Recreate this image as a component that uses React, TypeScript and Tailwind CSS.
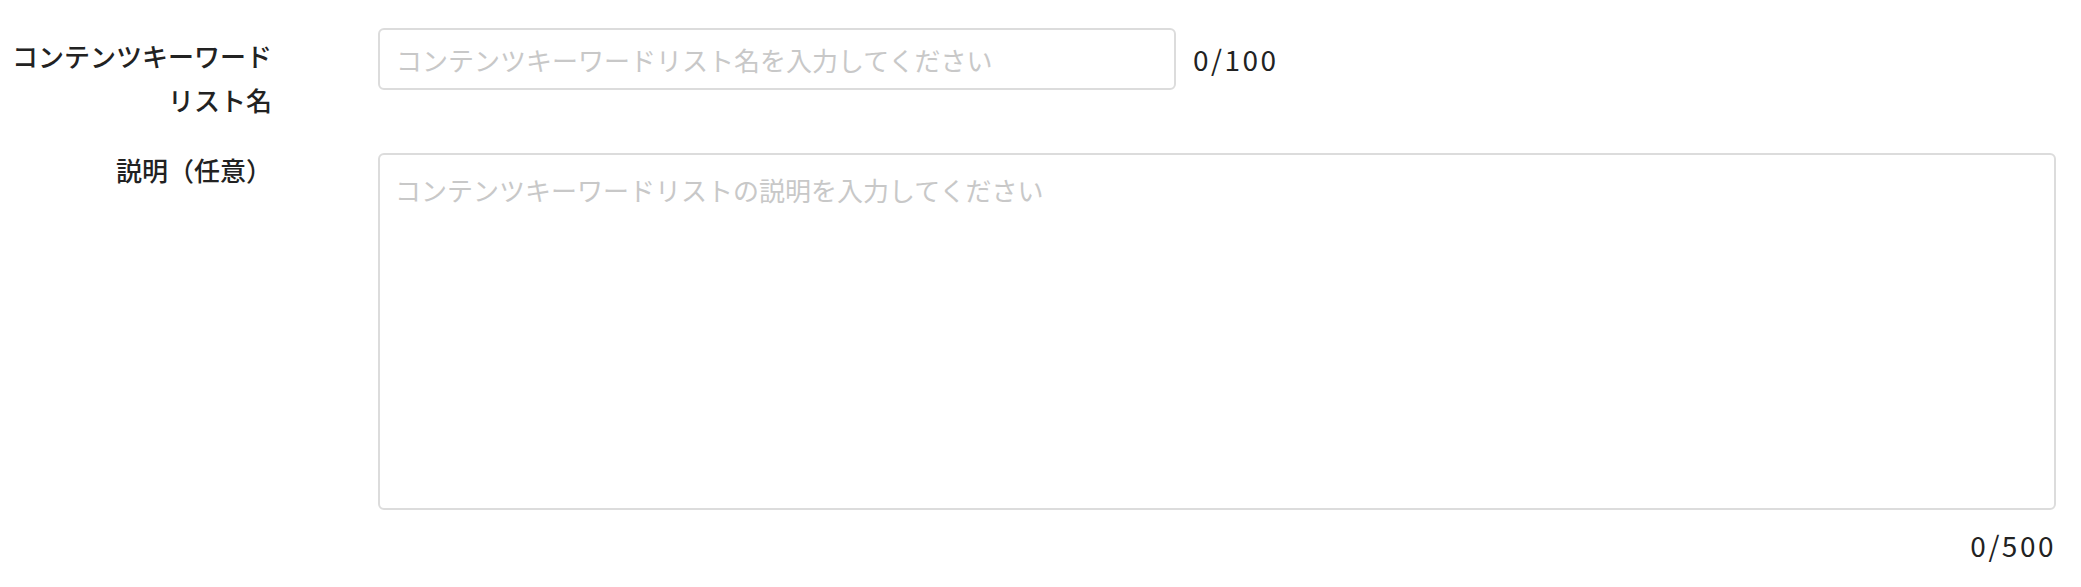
import React, { useState } from "react"

const font = "font-['Noto_Sans_CJK_JP','Noto_Sans',sans-serif]"

export default function App() {
  const [name, setName] = useState("")
  const [desc, setDesc] = useState("")

  return (
    <div className={`w-full min-h-screen bg-white pt-[28px] pr-[25px] text-[#222] ${font}`}>
      {/* name row */}
      <div className="flex items-start">
        <label className="w-[272px] shrink-0 pt-[6px] text-right text-[26px] font-medium leading-[44px]">
          コンテンツキーワード
          <br />
          リスト名
        </label>
        <input
          className={`ml-[106px] h-[62px] w-[798px] rounded-[6px] border-2 border-[#dcdcdc] px-[16px] text-[26px] outline-none placeholder:text-[#c8c8c8] ${font}`}
          placeholder="コンテンツキーワードリスト名を入力してください"
          value={name}
          maxLength={100}
          onChange={(e) => setName(e.target.value)}
        />
        <div className="ml-[17px] flex h-[62px] items-center text-[28px] tracking-[2.5px] text-[#222]">
          {name.length}/100
        </div>
      </div>

      {/* description row */}
      <div className="mt-[31px] flex items-start">
        <label className="w-[272px] shrink-0 text-right text-[26px] font-medium leading-[34px]">
          説明（任意）
        </label>
        <div className="ml-[106px] flex flex-1 flex-col">
          <textarea
            className={`h-[357px] w-full resize-none rounded-[6px] border-2 border-[#dcdcdc] px-[15px] py-[15px] text-[26px] leading-[40px] outline-none placeholder:text-[#c8c8c8] ${font}`}
            placeholder="コンテンツキーワードリストの説明を入力してください"
            value={desc}
            maxLength={500}
            onChange={(e) => setDesc(e.target.value)}
          />
          <div className="mt-[15px] text-right text-[28px] tracking-[2.5px] leading-[40px] text-[#222]">
            {desc.length}/500
          </div>
        </div>
      </div>
    </div>
  )
}
